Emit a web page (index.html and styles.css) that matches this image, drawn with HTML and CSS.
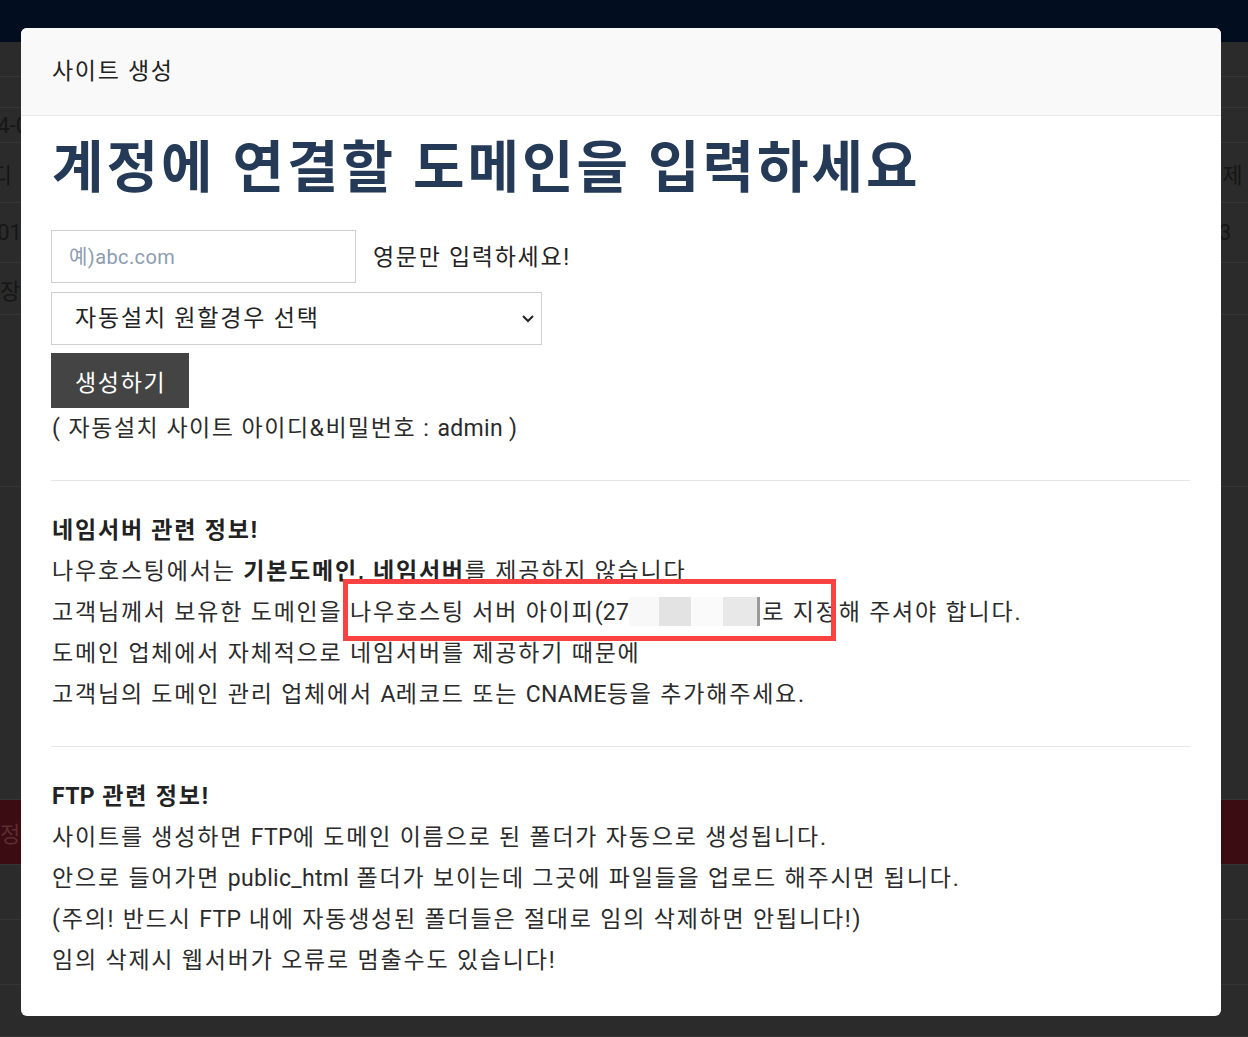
FILE: index.html
```html
<!DOCTYPE html>
<html lang="ko">
<head>
<meta charset="utf-8">
<title>사이트 생성</title>
<link rel="stylesheet" href="styles.css">
</head>
<body>
<div class="page">
  <div class="navbar"></div>
  <div class="bg-table">
    <div class="bg-row h35"></div>
    <div class="bg-row h31"></div>
    <div class="bg-row h35"><span class="l"><span>2024-0</span></span><span class="r"></span></div>
    <div class="bg-row h60"><span class="l short"><span>아이디</span></span><span class="r"><span class="r-del">삭제</span></span></div>
    <div class="bg-row h60"><span class="l mid"><span>2401</span></span><span class="r"><span class="r-num">123</span></span></div>
    <div class="bg-row h52"><span class="l wide"><span>장공</span></span><span class="r"></span></div>
    <div class="bg-row h172"></div>
    <div class="bg-row h313"></div>
    <div class="bg-row h65 red"><span class="l wide"><span>정지</span></span></div>
    <div class="bg-row h55"></div>
    <div class="bg-row h65"></div>
    <div class="bg-row h52"></div>
  </div>
</div>

<div class="modal">
  <div class="modal-header">사이트 생성</div>
  <div class="modal-body">
    <h1 class="title">계정에 연결할 도메인을 입력하세요</h1>
    <div class="input-row">
      <input class="domain-input" type="text" placeholder="예)abc.com">
      <span class="hint">영문만 입력하세요!</span>
    </div>
    <div class="select-wrap">
      <select class="auto-select">
        <option>자동설치 원할경우 선택</option>
      </select>
      <svg class="chevron" width="14" height="9" viewBox="0 0 14 9"><path d="M2 2 L7 7 L12 2" fill="none" stroke="#222" stroke-width="2"/></svg>
    </div>
    <button class="create-btn">생성하기</button>
    <p class="text tight">( 자동설치 사이트 아이디&amp;비밀번호 : <span class="en">admin )</span></p>
    <hr class="divider">
    <div class="section">
      <p class="text strong">네임서버 관련 정보!</p>
      <p class="text">나우호스팅에서는 <b>기본도메인, 네임서버</b>를 제공하지 않습니다</p>
      <p class="text">고객님께서 보유한 도메인을 나우호스팅 서버 아이피<span class="en">(27</span><span class="mask m1"></span><span class="mask m2"></span><span class="mask m3"></span><span class="mask m4"></span><span class="mask m5"></span>로 지정해 주셔야 합니다.</p>
      <p class="text">도메인 업체에서 자체적으로 네임서버를 제공하기 때문에</p>
      <p class="text">고객님의 도메인 관리 업체에서 <span class="en">A</span>레코드 또는 <span class="en">CNAME</span>등을 추가해주세요.</p>
    </div>
    <hr class="divider">
    <div class="section">
      <p class="text strong"><span class="en">FTP</span> 관련 정보!</p>
      <p class="text">사이트를 생성하면 <span class="en">FTP</span>에 도메인 이름으로 된 폴더가 자동으로 생성됩니다.</p>
      <p class="text">안으로 들어가면 <span class="en">public_html</span> 폴더가 보이는데 그곳에 파일들을 업로드 해주시면 됩니다.</p>
      <p class="text">(주의! 반드시 <span class="en">FTP</span> 내에 자동생성된 폴더들은 절대로 임의 삭제하면 안됩니다!)</p>
      <p class="text">임의 삭제시 웹서버가 오류로 멈출수도 있습니다!</p>
    </div>
  </div>
  <div class="highlight"></div>
</div>
</body>
</html>
```

FILE: styles.css
```css
html, body {
  margin: 0;
  padding: 0;
}
body {
  background: #2b2b2b;
  font-family: Roboto, "Noto Sans CJK KR", sans-serif;
  overflow: hidden;
  width: 1248px;
  height: 1037px;
}
.page {
  width: 1248px;
}
.navbar {
  height: 42px;
  background: #020e20;
}
.bg-table {
  display: flex;
  flex-direction: column;
}
.bg-row {
  display: flex;
  justify-content: space-between;
  align-items: center;
  border-bottom: 1px solid #353535;
  box-sizing: border-box;
  font-size: 22px;
  color: #161616;
  overflow: hidden;
}
.bg-row .l {
  width: 28px;
  display: flex;
  justify-content: flex-end;
  white-space: nowrap;
}
.bg-row .l.short {
  width: 12px;
}
.bg-row .l.mid {
  width: 22px;
}
.bg-row .l.wide {
  width: 44px;
  justify-content: flex-start;
}
.bg-row .r {
  width: 26px;
  display: flex;
  justify-content: flex-start;
  white-space: nowrap;
}
.bg-row .r-del {
  margin-left: -20px;
}
.bg-row .r-num {
  margin-left: -28px;
}
.bg-row.red {
  background: #3b0c11;
  color: #5a2e33;
}
.h31 { height: 31px; }
.h35 { height: 35px; }
.h52 { height: 52px; }
.h55 { height: 55px; }
.h60 { height: 60px; }
.h65 { height: 65px; }
.h172 { height: 172px; }
.h313 { height: 313px; }

.modal {
  position: absolute;
  left: 21px;
  top: 28px;
  width: 1200px;
  height: 988px;
  background: #fff;
  border-radius: 6px;
  overflow: hidden;
  box-sizing: border-box;
}
.modal-header {
  height: 88px;
  box-sizing: border-box;
  background: #f9f9f9;
  border-bottom: 1px solid #e8e8e8;
  padding: 0 31px 6px 31px;
  display: flex;
  align-items: center;
  font-size: 23px;
  letter-spacing: 1.7px;
  color: #222;
}
.modal-body {
  padding: 19px 31px 0 30px;
}
.title {
  margin: 0 0 0 1px;
  font-size: 56px;
  line-height: 67px;
  font-weight: 700;
  color: #243a57;
  letter-spacing: 3px;
}
.input-row {
  display: flex;
  align-items: center;
  margin-top: 28px;
}
.domain-input {
  width: 305px;
  height: 53px;
  box-sizing: border-box;
  border: 1px solid #cfcfcf;
  padding: 0 17px;
  font-family: Roboto, "Noto Sans CJK KR", sans-serif;
  font-size: 20px;
  letter-spacing: 0.4px;
  color: #333;
  outline: none;
  border-radius: 0;
}
.domain-input::placeholder {
  color: #8c9cb1;
}
.hint {
  margin-left: 17px;
  margin-bottom: 3px;
  font-size: 23px;
  letter-spacing: 1.7px;
  color: #222;
}
.select-wrap {
  position: relative;
  width: 491px;
  margin-top: 9px;
}
.auto-select {
  display: block;
  width: 491px;
  height: 53px;
  box-sizing: border-box;
  border: 1px solid #cfcfcf;
  background: #fff;
  appearance: none;
  -webkit-appearance: none;
  padding: 0 23px;
  font-family: Roboto, "Noto Sans CJK KR", sans-serif;
  font-size: 23px;
  letter-spacing: 1.8px;
  color: #222;
  border-radius: 0;
  outline: none;
}
.chevron {
  position: absolute;
  right: 7px;
  top: 22px;
}
.create-btn {
  display: block;
  margin-top: 8px;
  height: 55px;
  padding: 0 23px 0 24px;
  border: none;
  background: #444;
  color: #fff;
  font-family: Roboto, "Noto Sans CJK KR", sans-serif;
  font-size: 23px;
  letter-spacing: 1.7px;
  border-radius: 0;
}
.text {
  margin: 0 0 0 1px;
  font-size: 23px;
  line-height: 41px;
  letter-spacing: 1.8px;
  color: #2b2b2b;
  white-space: nowrap;
}
.text.tight {
  letter-spacing: 1.5px;
}
.text .en {
  letter-spacing: 0.3px;
}
.text b, .text.strong {
  font-weight: 700;
  color: #222;
}
.divider {
  border: none;
  border-top: 1px solid #e6e6e6;
  margin: 31px 0 29px 0;
  height: 0;
}
.mask {
  display: inline-block;
  height: 29px;
  vertical-align: -6px;
  letter-spacing: 0;
}
.m1 { width: 30px; background: #f8f8f8; }
.m2 { width: 32px; background: #e3e3e3; }
.m3 { width: 32px; background: #fafafa; }
.m4 { width: 34px; background: #e8e8e8; }
.m5 { width: 3px; background: #9a9a9a; margin-right: 2px; }
.highlight {
  position: absolute;
  left: 322px;
  top: 551px;
  width: 493px;
  height: 62px;
  box-sizing: border-box;
  border: 5px solid #fb4242;
  pointer-events: none;
}
```
